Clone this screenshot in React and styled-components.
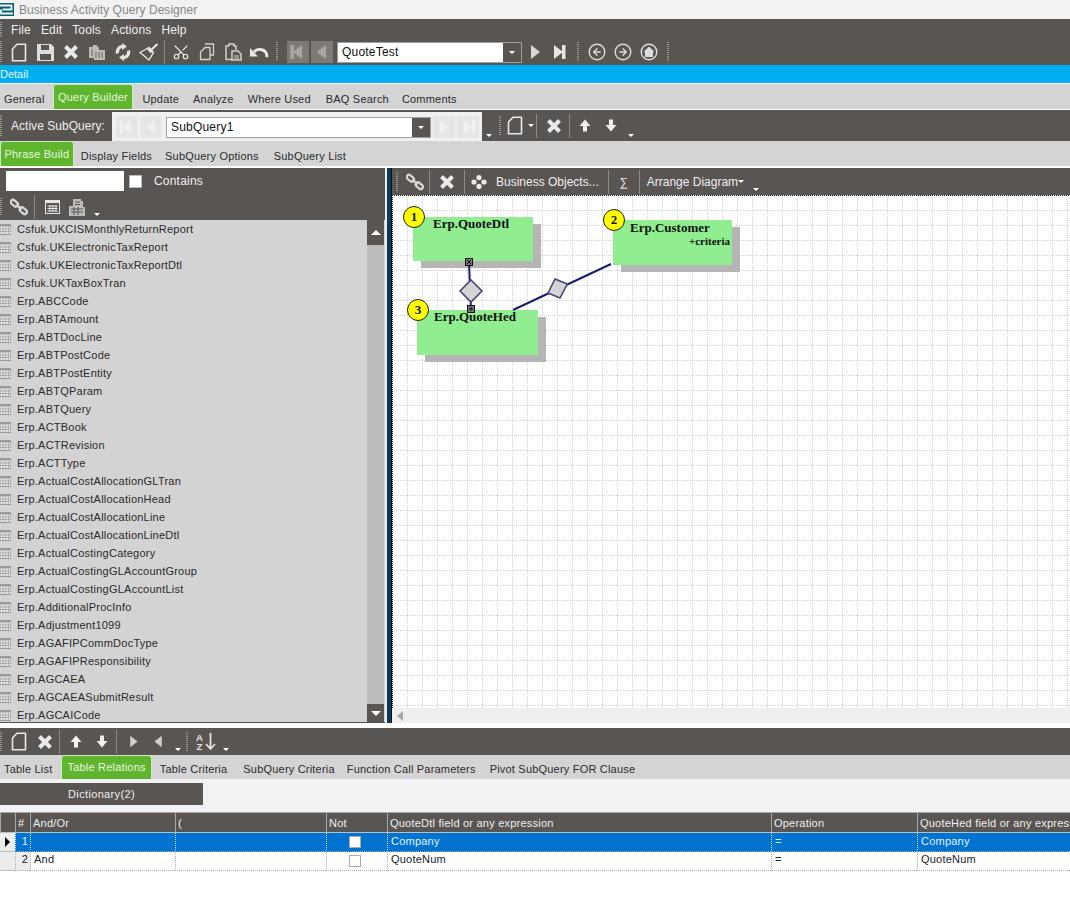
import React from 'react';
import styled, { createGlobalStyle } from 'styled-components';
import { ArrowLeft, ArrowRight, Scissors } from 'lucide-react';

const DARK = '#595553';
const GREEN = '#5fb52d';
const ICON = '#e9e9e9';

const tables = [
  'Csfuk.UKCISMonthlyReturnReport',
  'Csfuk.UKElectronicTaxReport',
  'Csfuk.UKElectronicTaxReportDtl',
  'Csfuk.UKTaxBoxTran',
  'Erp.ABCCode',
  'Erp.ABTAmount',
  'Erp.ABTDocLine',
  'Erp.ABTPostCode',
  'Erp.ABTPostEntity',
  'Erp.ABTQParam',
  'Erp.ABTQuery',
  'Erp.ACTBook',
  'Erp.ACTRevision',
  'Erp.ACTType',
  'Erp.ActualCostAllocationGLTran',
  'Erp.ActualCostAllocationHead',
  'Erp.ActualCostAllocationLine',
  'Erp.ActualCostAllocationLineDtl',
  'Erp.ActualCostingCategory',
  'Erp.ActualCostingGLAccountGroup',
  'Erp.ActualCostingGLAccountList',
  'Erp.AdditionalProcInfo',
  'Erp.Adjustment1099',
  'Erp.AGAFIPCommDocType',
  'Erp.AGAFIPResponsibility',
  'Erp.AGCAEA',
  'Erp.AGCAEASubmitResult',
  'Erp.AGCAICode',
];

const GlobalStyle = createGlobalStyle`
  html, body {
    margin: 0;
    padding: 0;
    background: #fff;
  }
  body {
    font-family: "Liberation Sans", Arial, sans-serif;
    font-size: 11px;
    color: #222;
  }
`;

const Page = styled.div`
  width: 1070px;
  height: 919px;
  overflow: hidden;
  display: flex;
  flex-direction: column;
  background: #fff;
`;

const TitleBar = styled.div`
  height: 19px;
  display: flex;
  align-items: center;
  gap: 5px;
  background: #f2f2f2;
  color: #858585;
  font-size: 12px;
  letter-spacing: 0.05px;
`;

const MenuBar = styled.div`
  height: 20px;
  box-sizing: border-box;
  padding-top: 2px;
  display: flex;
  align-items: center;
  background: ${DARK};
  color: #f0f0f0;
  font-size: 12px;
  letter-spacing: 0.15px;
`;

const MenuItem = styled.span`
  margin-left: ${(p) => p.$ml || 10}px;
`;

const Toolbar = styled.div`
  height: ${(p) => p.$h || 26}px;
  margin-top: ${(p) => p.$mt || 0}px;
  display: flex;
  align-items: center;
  flex-shrink: 0;
  background: ${DARK};
  color: #efefef;
  padding-left: ${(p) => p.$pl || 0}px;
`;

const Grip = styled.span`
  width: 2px;
  height: ${(p) => p.$h || 20}px;
  flex-shrink: 0;
  margin: 0 ${(p) => p.$mr ?? 4}px 0 ${(p) => p.$ml ?? 0}px;
  background: repeating-linear-gradient(to bottom, #9a9795 0 1px, transparent 1px 2px);
`;

const Sep = styled.span`
  width: 1px;
  height: 24px;
  flex-shrink: 0;
  background: #8d8a88;
  margin: 0 ${(p) => p.$mx ?? 2}px;
`;

const IconBtn = styled.span`
  width: ${(p) => p.$w || 26}px;
  height: 22px;
  flex-shrink: 0;
  display: flex;
  align-items: center;
  justify-content: center;
  margin-left: ${(p) => p.$ml || 0}px;
  color: ${ICON};
`;

const NavBox = styled.span`
  width: 22px;
  height: 22px;
  flex-shrink: 0;
  display: flex;
  align-items: center;
  justify-content: center;
  margin-left: ${(p) => p.$ml ?? 2}px;
  background: ${(p) => (p.$light ? '#e6e6e6' : '#7d7a78')};
  color: ${(p) => (p.$light ? '#f0f0f0' : '#a9a7a6')};
`;

const Caret = styled.span`
  width: 0;
  height: 0;
  flex-shrink: 0;
  align-self: ${(p) => (p.$inline ? 'center' : 'flex-end')};
  margin: 0 ${(p) => p.$mr || 0}px ${(p) => (p.$inline ? 0 : 4)}px ${(p) => p.$ml || 0}px;
  border-left: 3px solid transparent;
  border-right: 3px solid transparent;
  border-top: 3px solid #fff;
`;

const Combo = styled.div`
  width: ${(p) => p.$w}px;
  height: 21px;
  flex-shrink: 0;
  display: flex;
  margin-left: ${(p) => p.$ml || 0}px;
  border: 1px solid #a0a0a0;
  box-sizing: border-box;
  background: #fff;
  color: #111;
  font-size: 12px;
`;

const ComboText = styled.span`
  flex: 1;
  padding-left: 4px;
  line-height: 19px;
  letter-spacing: 0.2px;
`;

const ComboDrop = styled.span`
  width: 18px;
  display: flex;
  align-items: center;
  justify-content: center;
  background: ${DARK};

  &::after {
    content: '';
    border-left: 3px solid transparent;
    border-right: 3px solid transparent;
    border-top: 3px solid #fff;
  }
`;

const DetailBar = styled.div`
  height: 18px;
  line-height: 18px;
  flex-shrink: 0;
  background: #00aeef;
  color: #e8f8ff;
  font-size: 11px;
`;

const TabRow = styled.div`
  height: ${(p) => p.$h}px;
  margin-top: ${(p) => p.$mt || 0}px;
  flex-shrink: 0;
  display: flex;
  align-items: flex-end;
  padding-left: ${(p) => p.$pl || 0}px;
  background: #d4d4d4;
`;

const Tab = styled.span`
  box-sizing: border-box;
  margin-left: ${(p) => p.$ml || 0}px;
  padding: 0 0 4px;
  color: #2b2b2b;
  font-size: 11px;
  letter-spacing: 0.2px;
  white-space: nowrap;
`;

const ActiveTab = styled(Tab)`
  height: 100%;
  padding: ${(p) => p.$pt || 6}px ${(p) => p.$px}px 0;
  color: #e9f6e0;
  background: ${GREEN};
  border: 1px solid #cfe8bf;
  border-bottom: 0;
  border-radius: 3px 3px 0 0;
`;

const SubQueryBar = styled.div`
  height: 31px;
  margin-top: 1px;
  flex-shrink: 0;
  display: flex;
  align-items: stretch;
  background: ${DARK};
  color: #efefef;
`;

const SubQueryLabel = styled.div`
  width: 112px;
  flex-shrink: 0;
  display: flex;
  align-items: center;
  font-size: 12px;
  letter-spacing: 0.03px;
`;

const SubQueryNav = styled.div`
  width: 370px;
  margin-top: 2px;
  flex-shrink: 0;
  display: flex;
  align-items: center;
  padding: 1px 0 0 2px;
  box-sizing: border-box;
  background: #f0f0f0;
`;

const SubQueryTools = styled.div`
  display: flex;
  align-items: center;
`;

const Workspace = styled.div`
  height: 555px;
  margin-top: 2px;
  flex-shrink: 0;
  display: flex;
  background: #efefef;
`;

const LeftPanel = styled.div`
  width: 385px;
  flex-shrink: 0;
  display: flex;
  flex-direction: column;
`;

const SearchInput = styled.span`
  width: 118px;
  height: 20px;
  flex-shrink: 0;
  background: #fff;
`;

const SearchCheck = styled.span`
  width: 11px;
  height: 11px;
  flex-shrink: 0;
  margin: 0 12px 0 5px;
  background: #fff;
  border: 1px solid #bbb;
`;

const SearchLabel = styled.span`
  font-size: 12px;
  letter-spacing: 0.2px;
`;

const ListArea = styled.div`
  flex: 1;
  min-height: 0;
  display: flex;
  background: #d3d3d3;
  border-bottom: 1px solid #55514f;
`;

const ListRows = styled.div`
  flex: 1;
  min-width: 0;
  overflow: hidden;
`;

const ListRow = styled.div`
  height: 18px;
  display: flex;
  align-items: center;
  gap: 6px;
  color: #2a2a2a;
  font-size: 11px;
  letter-spacing: 0.23px;
  white-space: nowrap;
`;

const Scrollbar = styled.div`
  width: 17px;
  margin-right: 1px;
  flex-shrink: 0;
  display: flex;
  flex-direction: column;
  justify-content: space-between;
  background: #bcbcbc;
`;

const ScrollBtn = styled.span`
  height: ${(p) => p.$h}px;
  display: flex;
  align-items: center;
  justify-content: center;
  background: ${DARK};

  &::after {
    content: '';
    border-left: 5px solid transparent;
    border-right: 5px solid transparent;
    ${(p) => (p.$up ? 'border-bottom: 5px solid #fff;' : 'border-top: 5px solid #fff;')}
  }
`;

const Splitter = styled.div`
  width: 5px;
  margin-left: 2px;
  flex-shrink: 0;
  background: linear-gradient(to right, #0d3a5a 0 4px, #111 4px);
`;

const RightPanel = styled.div`
  flex: 1;
  min-width: 0;
  display: flex;
  flex-direction: column;
`;

const ToolText = styled.span`
  padding-top: 1px;
  font-size: 12px;
  white-space: nowrap;
  margin: 0 ${(p) => p.$mr || 0}px 0 ${(p) => p.$ml || 0}px;
`;

const Canvas = styled.div`
  position: relative;
  height: 513px;
  flex-shrink: 0;
  overflow: hidden;
  background: #fff;
`;

const DiagramLayer = styled.svg`
  position: absolute;
  inset: 0;
  z-index: 2;
`;

const GridLayer = styled.svg`
  position: absolute;
  inset: 0;
`;

const Node = styled.div`
  position: absolute;
  left: ${(p) => p.$x}px;
  top: ${(p) => p.$y}px;
  width: ${(p) => p.$w}px;
  height: ${(p) => p.$h}px;
  z-index: 1;
  background: #90ee90;
  box-shadow: 8px 7px 0 #b5b5b5;
  font-family: "Liberation Serif", "Times New Roman", serif;
  font-weight: bold;
  color: #111;
`;

const NodeTitle = styled.div`
  position: absolute;
  left: ${(p) => p.$x}px;
  top: ${(p) => p.$y}px;
  font-size: 13px;
  white-space: nowrap;
`;

const NodeNote = styled.div`
  position: absolute;
  right: 2px;
  top: 15px;
  font-size: 11px;
`;

const Badge = styled.div`
  position: absolute;
  left: -10px;
  top: -11px;
  width: 20px;
  height: 20px;
  border: 1px solid #222;
  border-radius: 50%;
  background: #ffff00;
  font-size: 13px;
  line-height: 19px;
  text-align: center;
`;

const HScroll = styled.div`
  flex: 1;
  display: flex;
  align-items: center;
  padding-left: 5px;
  background: #efefef;

  &::before {
    content: '';
    border-top: 5px solid transparent;
    border-bottom: 5px solid transparent;
    border-right: 6px solid #a8a8a8;
  }
`;

const DictionaryRow = styled.div`
  height: 33px;
  flex-shrink: 0;
  display: flex;
  align-items: flex-start;
  padding-top: 4px;
  box-sizing: border-box;
  background: #f2f2f4;
`;

const DictionaryTab = styled.div`
  width: 203px;
  height: 22px;
  line-height: 22px;
  text-align: center;
  background: ${DARK};
  color: #efefef;
  font-size: 11px;
  letter-spacing: 0.35px;
`;

const GridTable = styled.div`
  display: grid;
  grid-template-columns: 15px 15px 145px 151px 61px 384px 146px 153px;
  flex-shrink: 0;
  font-size: 11px;
  letter-spacing: 0.22px;
`;

const HeadCell = styled.div`
  height: 21px;
  line-height: 21px;
  box-sizing: border-box;
  padding-left: 2px;
  overflow: hidden;
  white-space: nowrap;
  background: ${DARK};
  color: #efefef;
  border-top: 1px solid #a5a5a5;
  border-bottom: 1px solid #b5c2cc;
  border-left: 1px solid #a5a5a5;
`;

const Gutter = styled.div`
  height: ${(p) => p.$h}px;
  box-sizing: border-box;
  display: flex;
  align-items: center;
  justify-content: center;
  background: #ececec;
  border-bottom: 1px solid #bbb;

  &::after {
    content: '';
    ${(p) =>
      p.$current
        ? 'border-top: 5px solid transparent; border-bottom: 5px solid transparent; border-left: 5px solid #000;'
        : ''}
  }
`;

const Cell = styled.div`
  height: ${(p) => p.$h}px;
  box-sizing: border-box;
  display: flex;
  align-items: center;
  justify-content: ${(p) => p.$align || 'flex-start'};
  padding: 0 ${(p) => (p.$align === 'center' ? 7 : 3)}px ${(p) => (p.$selected ? 3 : 4)}px 3px;
  overflow: hidden;
  white-space: nowrap;
  background: ${(p) => (p.$selected ? '#0072d0' : '#fff')};
  color: ${(p) => (p.$selected ? '#e6f2ff' : '#222')};
  border-left: 1px dotted ${(p) => (p.$selected ? '#cfe3f5' : '#aaa')};
  border-bottom: 1px dotted #aaa;
`;

const RowNumber = styled(Cell)`
  padding: 0 2px ${(p) => (p.$selected ? 3 : 4)}px 0;
  background: ${(p) => (p.$selected ? '#0072d0' : '#ececec')};
`;

const CellCheck = styled.span`
  width: 10px;
  height: 10px;
  margin-top: 3px;
  background: #fff;
  border: 1px solid #aaa;
`;

const Logo = () => (
  <svg width="14" height="13" viewBox="0 0 14 13">
    <rect width="14" height="13" fill="#0b5f73" />
    <path d="M0 2.5H11.5V6.5H2.5M1 6.5V10.5H13" fill="none" stroke="#eef7f8" strokeWidth="1.8" />
  </svg>
);

const NewDoc = () => (
  <svg width="16" height="19" viewBox="0 0 16 19">
    <path d="M1.5 6 6 1.2H14.5V17.8H1.5Z" fill="none" stroke="currentColor" strokeWidth="1.6" strokeLinejoin="round" />
  </svg>
);

const Save = () => (
  <svg width="17" height="17" viewBox="0 0 17 17">
    <path fill="#dedede" d="M0 0H14L17 3V17H0ZM4 1V6H12V1ZM3 10V16H14V10Z" fillRule="evenodd" />
  </svg>
);

const Cross = ({ size = 16 }) => (
  <svg width={size} height={size} viewBox="0 0 16 16">
    <path d="M2.5 2.5 13.5 13.5M13.5 2.5 2.5 13.5" stroke="currentColor" strokeWidth="4" />
  </svg>
);

const DeleteDocs = () => (
  <svg width="16" height="17" viewBox="0 0 16 17">
    <path fill="#bdbbba" d="M0 3H4V1H8V3H10V6H16V16H5V14H0Z" />
    <path fill="none" stroke="#6a6664" strokeWidth="1" d="M7 8V14M10 8V14M13 8V14M3 5V12" />
  </svg>
);

const Refresh = () => (
  <svg width="20" height="18" viewBox="0 0 20 18">
    <path d="M4.5 10.5A6 6 0 0 1 9 3.2" fill="none" stroke="#e4e4e4" strokeWidth="3.2" />
    <path d="M15.5 7.5A6 6 0 0 1 11 14.8" fill="none" stroke="#e4e4e4" strokeWidth="3.2" />
    <path d="M9 0 14 3.5 9 7Z" fill="#e4e4e4" />
    <path d="M11 11 6 14.5 11 18Z" fill="#e4e4e4" />
  </svg>
);

const Broom = () => (
  <svg width="20" height="19" viewBox="0 0 20 19" fill="none" stroke="currentColor">
    <path d="M12 7 18.5 1" strokeWidth="2" />
    <path d="M10 4.5 14.5 9.5 10 17 1 9.5Z" strokeWidth="1.4" strokeLinejoin="round" />
    <path d="M9 5.5 12.5 9.5" strokeWidth="2.4" />
  </svg>
);

const CopyDoc = () => (
  <svg width="16" height="18" viewBox="0 0 16 18" fill="none" stroke="#d2d2d2" strokeWidth="1.3">
    <path d="M6 1H14.5V12H11" />
    <path d="M1.5 9 6 4.5H11V16.5H1.5Z" strokeLinejoin="round" />
  </svg>
);

const PasteDoc = () => (
  <svg width="17" height="18" viewBox="0 0 17 18" fill="none" stroke="#d2d2d2" strokeWidth="1.5">
    <path d="M4 3H1V16.5H7" />
    <path d="M4 3V1H9V3H11V7" />
    <path d="M7 8H13L16 11V17H7Z" />
    <path d="M9 13H14M9 15H14" strokeWidth="1" />
  </svg>
);

const Undo = () => (
  <svg width="20" height="14" viewBox="0 0 20 14">
    <path d="M5 7A7 6 0 0 1 17.5 12" fill="none" stroke="#e9e9e9" strokeWidth="3" />
    <path d="M1 3V11.5H9Z" fill="#e9e9e9" />
  </svg>
);

const Tri = ({ dir = 'right', size = 16, bar, color = 'currentColor' }) => (
  <svg width={size} height={size} viewBox="0 0 16 16" fill={color}>
    {dir === 'right' ? <path d="M4 1 13 8 4 15Z" /> : <path d="M12 1 3 8 12 15Z" />}
    {bar && (dir === 'right' ? <rect x="12" y="1" width="3.5" height="14" /> : <rect x="0.5" y="1" width="3.5" height="14" />)}
  </svg>
);

const BoldArrow = ({ down }) => (
  <svg width="12" height="13" viewBox="0 0 12 13" style={down ? { transform: 'scaleY(-1)' } : undefined}>
    <path fill="#f2f2f2" d="M6 0.5 11.5 7H8V12.5H4V7H0.5Z" />
  </svg>
);

const SortIcon = () => (
  <svg width="21" height="19" viewBox="0 0 21 19">
    <text x="0" y="8.5" fontFamily="Liberation Sans, sans-serif" fontSize="9.5" fontWeight="bold" fill="#e4e4e4">A</text>
    <text x="0.5" y="18" fontFamily="Liberation Sans, sans-serif" fontSize="9.5" fontWeight="bold" fill="#e4e4e4">Z</text>
    <path d="M14.5 1V16M10 12 14.5 17 19 12" fill="none" stroke="#e4e4e4" strokeWidth="1.8" />
  </svg>
);

const RoundIcon = ({ children }) => (
  <svg width="18" height="18" viewBox="0 0 18 18">
    <circle cx="9" cy="9" r="7.8" fill="none" stroke="#dcdcdc" strokeWidth="1.4" />
    {children}
  </svg>
);

const Home = () => (
  <RoundIcon>
    <path fill="#dcdcdc" d="M9 3.5 14.5 9H13V14H5V9H3.5Z" />
  </RoundIcon>
);

const ChainLink = () => (
  <svg width="18" height="18" viewBox="0 0 18 18" fill="none" stroke="#d9d9d9" strokeWidth="2.2">
    <rect x="0.5" y="3" width="8" height="4.5" rx="2.2" transform="rotate(40 4.5 5)" />
    <rect x="9.5" y="10.5" width="8" height="4.5" rx="2.2" transform="rotate(40 13.5 12.5)" />
    <path d="M6.5 6.5 11.5 11.5" />
  </svg>
);

const GridIcon = () => (
  <svg width="15" height="14" viewBox="0 0 15 14">
    <rect x="0.5" y="0.5" width="14" height="13" fill="#595553" stroke="#e6e6e6" />
    <rect x="0" y="0" width="15" height="3" fill="#e6e6e6" />
    <path d="M2.5 6H12.5M2.5 8.5H12.5M2.5 11H12.5M5 5V12M8 5V12M11 5V12" stroke="#e6e6e6" strokeWidth="1" />
  </svg>
);

const CalcIcon = () => (
  <svg width="16" height="17" viewBox="0 0 16 17">
    <path fill="#bdbbba" d="M4 0H12V2H14V8H16V17H0V7H4Z" />
    <path d="M2 10H14M2 13H14M5 8V16M9 8V16M6 3H11M6 5.5H11" stroke="#595553" strokeWidth="1" />
  </svg>
);

const Objects = () => (
  <svg width="16" height="14" viewBox="0 0 16 14" fill="#e9e9e9">
    <circle cx="3" cy="7" r="2.6" />
    <circle cx="8" cy="2.6" r="2.6" />
    <circle cx="8" cy="11.4" r="2.6" />
    <circle cx="13" cy="7" r="2.6" />
  </svg>
);

const TableGlyph = () => (
  <svg width="11" height="11" viewBox="0 0 11 11">
    <rect x="0" y="0.5" width="11" height="10" fill="#efefef" stroke="#999" />
    <rect x="0" y="0" width="11" height="2.5" fill="#999" />
    <path d="M0 5H11M0 7.5H11M3 3V10M5.7 3V10M8.4 3V10" stroke="#9c9c9c" strokeWidth="0.8" />
  </svg>
);

const Diamond = ({ points }) => <polygon points={points} fill="#d4d4d8" stroke="#454a6e" strokeWidth="1.6" />;

const Handle = ({ x, y, glyph }) => (
  <g>
    <rect x={x - 3.5} y={y - 3.5} width="7" height="7" fill="#777" stroke="#111" />
    <path d={glyph} transform={`translate(${x} ${y})`} stroke="#111" strokeWidth="1" />
  </g>
);

const Diagram = () => (
  <Canvas>
    <GridLayer width="678" height="513">
      <defs>
        <pattern id="dots" width="15" height="15" patternUnits="userSpaceOnUse">
          <path d="M0.5 0V15M0 0.5H15" stroke="#d3d3d3" strokeWidth="1" strokeDasharray="1 1" />
        </pattern>
      </defs>
      <rect width="678" height="513" fill="url(#dots)" />
      <path d="M0.5 0V513M0 0.5H678" stroke="#222" strokeWidth="1" strokeDasharray="1 1" />
    </GridLayer>
    <Node $x={21} $y={22} $w={120} $h={44}>
      <Badge>1</Badge>
      <NodeTitle $x={20} $y={-1}>Erp.QuoteDtl</NodeTitle>
    </Node>
    <Node $x={221} $y={25} $w={119} $h={45}>
      <Badge>2</Badge>
      <NodeTitle $x={17} $y={0}>Erp.Customer</NodeTitle>
      <NodeNote>+criteria</NodeNote>
    </Node>
    <Node $x={25} $y={115} $w={121} $h={45}>
      <Badge>3</Badge>
      <NodeTitle $x={17} $y={-1}>Erp.QuoteHed</NodeTitle>
    </Node>
    <DiagramLayer width="678" height="513">
      <path d="M77 67 79 116" stroke="#1c1c6e" strokeWidth="2" />
      <path d="M121 115 219 69" stroke="#1c1c6e" strokeWidth="2" />
      <Diamond points="79,85 90,96 79,107 68,96" />
      <Diamond points="163,84 175.3,89 168,103 156,98" />
      <Handle x={77} y={67} glyph="M-2 -2 2 2M2 -2 -2 2" />
      <Handle x={79} y={114} glyph="M-2 0H2M0 -2V2" />
    </DiagramLayer>
  </Canvas>
);

export default function App() {
  return (
    <Page>
      <GlobalStyle />
      <TitleBar>
        <Logo />
        Business Activity Query Designer
      </TitleBar>
      <MenuBar>
        <Grip $h={16} $mr={0} />
        <MenuItem $ml={9}>File</MenuItem>
        <MenuItem>Edit</MenuItem>
        <MenuItem>Tools</MenuItem>
        <MenuItem>Actions</MenuItem>
        <MenuItem>Help</MenuItem>
      </MenuBar>

      <Toolbar>
        <Grip $h={22} />
        <IconBtn><NewDoc /></IconBtn>
        <IconBtn><Save /></IconBtn>
        <IconBtn><Cross /></IconBtn>
        <IconBtn><DeleteDocs /></IconBtn>
        <IconBtn><Refresh /></IconBtn>
        <IconBtn><Broom /></IconBtn>
        <Sep $mx={2} />
        <IconBtn $ml={1}><Scissors size={18} strokeWidth={1.6} style={{ transform: 'rotate(-90deg)' }} /></IconBtn>
        <IconBtn><CopyDoc /></IconBtn>
        <IconBtn><PasteDoc /></IconBtn>
        <IconBtn><Undo /></IconBtn>
        <Grip $h={20} $ml={4} $mr={9} />
        <NavBox $ml={0}><Tri dir="left" bar /></NavBox>
        <NavBox><Tri dir="left" /></NavBox>
        <Combo $w={185} $ml={4}>
          <ComboText>QuoteTest</ComboText>
          <ComboDrop />
        </Combo>
        <IconBtn $w={26}><Tri color="#d9d9d9" /></IconBtn>
        <IconBtn $w={20}><Tri bar color="#e6e6e6" /></IconBtn>
        <Grip $h={20} $ml={9} $mr={5} />
        <IconBtn><RoundIcon><ArrowLeft x="3.5" y="3.5" size={11} strokeWidth={3} color="#dcdcdc" /></RoundIcon></IconBtn>
        <IconBtn><RoundIcon><ArrowRight x="3.5" y="3.5" size={11} strokeWidth={3} color="#dcdcdc" /></RoundIcon></IconBtn>
        <IconBtn><Home /></IconBtn>
        <Grip $h={20} $ml={5} />
      </Toolbar>

      <DetailBar>Detail</DetailBar>

      <TabRow $h={25} $mt={1} $pl={4}>
        <Tab>General</Tab>
        <ActiveTab $px={4.5} $ml={8}>Query Builder</ActiveTab>
        <Tab $ml={9}>Update</Tab>
        <Tab $ml={14}>Analyze</Tab>
        <Tab $ml={14}>Where Used</Tab>
        <Tab $ml={15}>BAQ Search</Tab>
        <Tab $ml={13}>Comments</Tab>
      </TabRow>

      <SubQueryBar>
        <SubQueryLabel>
          <Grip $h={22} $mr={9} />
          Active SubQuery:
        </SubQueryLabel>
        <SubQueryNav>
          <NavBox $light $ml={2}><Tri dir="left" bar /></NavBox>
          <NavBox $light><Tri dir="left" /></NavBox>
          <Combo $w={265} $ml={4}>
            <ComboText>SubQuery1</ComboText>
            <ComboDrop />
          </Combo>
          <NavBox $light><Tri /></NavBox>
          <NavBox $light><Tri bar /></NavBox>
        </SubQueryNav>
        <SubQueryTools>
          <Caret $ml={4} />
          <Grip $h={20} $ml={7} $mr={1} />
          <IconBtn><NewDoc /></IconBtn>
          <Caret $inline />
          <Sep $mx={2} />
          <IconBtn $w={30}><Cross /></IconBtn>
          <Sep $mx={0} />
          <IconBtn $w={30}><BoldArrow /></IconBtn>
          <IconBtn $w={22}><BoldArrow down /></IconBtn>
          <Caret $ml={6} />
        </SubQueryTools>
      </SubQueryBar>

      <TabRow $h={25}>
        <ActiveTab $px={3.5}>Phrase Build</ActiveTab>
        <Tab $ml={7}>Display Fields</Tab>
        <Tab $ml={13}>SubQuery Options</Tab>
        <Tab $ml={15}>SubQuery List</Tab>
      </TabRow>

      <Workspace>
        <LeftPanel>
          <Toolbar $pl={6}>
            <SearchInput />
            <SearchCheck />
            <SearchLabel>Contains</SearchLabel>
          </Toolbar>
          <Toolbar>
            <Grip $h={18} />
            <IconBtn><ChainLink /></IconBtn>
            <Sep $mx={2} />
            <IconBtn $w={30}><GridIcon /></IconBtn>
            <IconBtn $w={20}><CalcIcon /></IconBtn>
            <Caret $ml={7} />
          </Toolbar>
          <ListArea>
            <ListRows>
              {tables.map((name) => (
                <ListRow key={name}>
                  <TableGlyph />
                  {name}
                </ListRow>
              ))}
            </ListRows>
            <Scrollbar>
              <ScrollBtn $up $h={25} />
              <ScrollBtn $h={18} />
            </Scrollbar>
          </ListArea>
        </LeftPanel>

        <Splitter />

        <RightPanel>
          <Toolbar $h={27} $pl={4}>
            <Grip $h={20} />
            <IconBtn><ChainLink /></IconBtn>
            <Sep $mx={1} />
            <IconBtn $w={32}><Cross /></IconBtn>
            <Sep $mx={1} />
            <IconBtn><Objects /></IconBtn>
            <ToolText $ml={4} $mr={9}>Business Objects...</ToolText>
            <Sep $mx={0} />
            <IconBtn $w={30}><ToolText>∑</ToolText></IconBtn>
            <Sep $mx={0} />
            <ToolText $ml={7}>Arrange Diagram</ToolText>
            <Caret $inline />
            <Caret $ml={9} />
          </Toolbar>
          <Diagram />
          <HScroll />
        </RightPanel>
      </Workspace>

      <Toolbar $h={27} $mt={5}>
        <Grip $h={20} />
        <IconBtn><NewDoc /></IconBtn>
        <IconBtn><Cross /></IconBtn>
        <Sep $mx={1} />
        <IconBtn $w={30}><BoldArrow /></IconBtn>
        <IconBtn $w={22}><BoldArrow down /></IconBtn>
        <Sep $mx={3} />
        <IconBtn $w={26}><Tri size={13} color="#cfcfcf" /></IconBtn>
        <IconBtn $w={24}><Tri dir="left" size={13} color="#cfcfcf" /></IconBtn>
        <Caret $ml={5} />
        <Grip $h={20} $ml={5} $mr={6} />
        <IconBtn $w={24}><SortIcon /></IconBtn>
        <Caret $ml={5} />
      </Toolbar>

      <TabRow $h={24} $pl={4}>
        <Tab>Table List</Tab>
        <ActiveTab $px={5} $pt={5} $ml={9}>Table Relations</ActiveTab>
        <Tab $ml={8}>Table Criteria</Tab>
        <Tab $ml={16}>SubQuery Criteria</Tab>
        <Tab $ml={12}>Function Call Parameters</Tab>
        <Tab $ml={14}>Pivot SubQuery FOR Clause</Tab>
      </TabRow>

      <DictionaryRow>
        <DictionaryTab>Dictionary(2)</DictionaryTab>
      </DictionaryRow>

      <GridTable>
        <HeadCell />
        <HeadCell>#</HeadCell>
        <HeadCell>And/Or</HeadCell>
        <HeadCell>(</HeadCell>
        <HeadCell>Not</HeadCell>
        <HeadCell>QuoteDtl field or any expression</HeadCell>
        <HeadCell>Operation</HeadCell>
        <HeadCell>QuoteHed field or any expression</HeadCell>

        <Gutter $h={19} $current />
        <RowNumber $h={19} $selected $align="flex-end">1</RowNumber>
        <Cell $h={19} $selected />
        <Cell $h={19} $selected />
        <Cell $h={19} $selected $align="center"><CellCheck /></Cell>
        <Cell $h={19} $selected>Company</Cell>
        <Cell $h={19} $selected>=</Cell>
        <Cell $h={19} $selected>Company</Cell>

        <Gutter $h={19} />
        <RowNumber $h={19} $align="flex-end">2</RowNumber>
        <Cell $h={19}>And</Cell>
        <Cell $h={19} />
        <Cell $h={19} $align="center"><CellCheck /></Cell>
        <Cell $h={19}>QuoteNum</Cell>
        <Cell $h={19}>=</Cell>
        <Cell $h={19}>QuoteNum</Cell>
      </GridTable>
    </Page>
  );
}
